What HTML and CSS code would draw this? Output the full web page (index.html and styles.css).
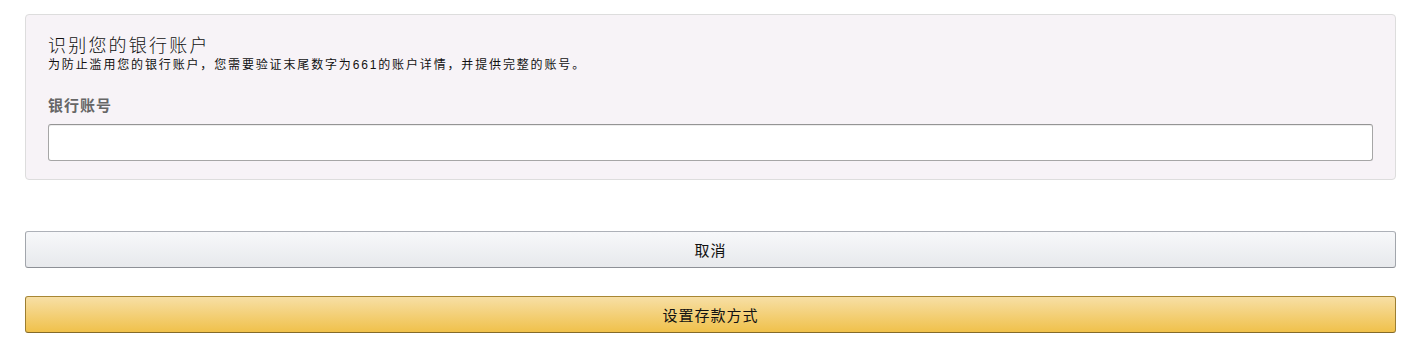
FILE: index.html
```html
<!DOCTYPE html>
<html lang="zh-CN">
<head>
    <meta charset="UTF-8" />
    <meta name="viewport" content="width=device-width, initial-scale=1.0" />
    <title>识别您的银行账户</title>
    <link rel="stylesheet" href="styles.css">
</head>
<body>
    <div class="page">
        <!-- ========= 验证框 ========= -->
        <div class="verify-box">
            <h1 class="verify-title">识别您的银行账户</h1>
            <p class="verify-desc">为防止滥用您的银行账户，您需要验证末尾数字为661的账户详情，并提供完整的账号。</p>
            <label class="field-label" for="accountNumber">银行账号</label>
            <input class="field-input" id="accountNumber" type="text" />
        </div>

        <!-- ========= 按钮 ========= -->
        <div class="actions">
            <button class="btn btn-secondary" type="button">取消</button>
            <button class="btn btn-primary" type="button">设置存款方式</button>
        </div>
    </div>
</body>
</html>
```

FILE: styles.css
```css
:root {
    --text-base: #111;
    --box-bg: #f7f3f7;
    --box-border: #dddddd;
    --label: #666;
}

body {
    margin: 0;
    font-family: "Liberation Sans", "Noto Sans CJK SC", sans-serif;
    color: var(--text-base);
    background: #fff;
}

.page {
    width: 1371px;
    margin: 0 0 0 25px;
    padding-top: 14px;
}

/* ====== Caja de verificación ====== */
.verify-box {
    display: flex;
    flex-direction: column;
    padding: 18px 22px;
    background: var(--box-bg);
    border: 1px solid var(--box-border);
    border-radius: 4px;
}
.verify-title {
    margin: 0;
    padding-top: 2px;
    font-size: 18px;
    font-weight: 300;
    line-height: 22px;
    letter-spacing: 2.2px;
}
.verify-desc {
    margin: 0;
    font-size: 12px;
    line-height: 16px;
    letter-spacing: 1.85px;
}
.field-label {
    margin-top: 23px;
    font-size: 15px;
    font-weight: bold;
    line-height: 20px;
    letter-spacing: 1px;
    color: var(--label);
}
.field-input {
    margin-top: 8px;
    height: 37px;
    box-sizing: border-box;
    border: 1px solid #a6a6a6;
    border-top-color: #949494;
    border-radius: 3px;
    background: #fff;
    box-shadow: 0 1px 0 rgba(0, 0, 0, 0.07) inset;
}

/* ====== Botones ====== */
.actions {
    display: flex;
    flex-direction: column;
    gap: 28px;
    margin-top: 51px;
}
.btn {
    height: 37px;
    border: 1px solid;
    border-radius: 3px;
    font-family: inherit;
    font-size: 15px;
    letter-spacing: 1px;
    color: #111;
    cursor: pointer;
}
.btn-secondary {
    background: linear-gradient(to bottom, #f7f8fa, #e7e9ec);
    border-color: #adb1b8 #a2a6ac #8d9096;
}
.btn-primary {
    background: linear-gradient(to bottom, #f7dfa5, #f0c14b);
    border-color: #a88734 #9c7e31 #846a29;
}
```
